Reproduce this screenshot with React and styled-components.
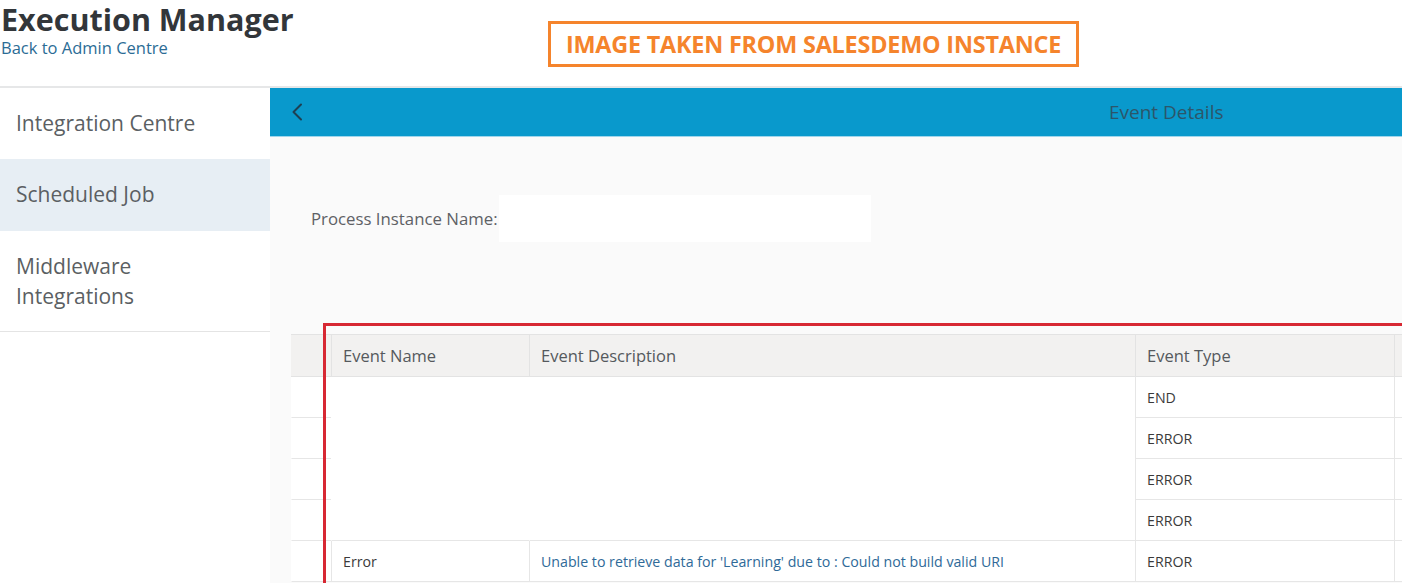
import React from "react";
import styled, { createGlobalStyle } from "styled-components";

const Global = createGlobalStyle`
  html, body { margin: 0; padding: 0; overflow: hidden; background: #ffffff; }
  body { font-family: "Open Sans", "Noto Sans", Arial, sans-serif; color: #333; }
  * { box-sizing: border-box; }
`;

const Page = styled.div`
  width: 1402px;
  height: 583px;
  display: flex;
  flex-direction: column;
  overflow: hidden;
`;

const Header = styled.header`
  height: 88px;
  flex: none;
  display: flex;
  align-items: flex-start;
  border-bottom: 2px solid #e6e7e8;
`;

const TitleBlock = styled.div`
  width: 548px;
  padding-left: 1px;
  padding-top: 1px;
`;

const Title = styled.h1`
  margin: 0;
  font-size: 30.5px;
  line-height: 36px;
  font-weight: 700;
  color: #32363a;
  white-space: nowrap;
`;

const BackLink = styled.a`
  display: block;
  margin-top: 1px;
  font-size: 16.5px;
  line-height: 20px;
  color: #2b6c95;
  text-decoration: none;
`;

const Stamp = styled.div`
  margin-top: 21px;
  width: 531px;
  height: 46px;
  border: 3px solid #f5842c;
  display: flex;
  align-items: center;
  justify-content: center;
  font-size: 23.4px;
  font-weight: 700;
  color: #f5842c;
  letter-spacing: -0.2px;
  white-space: nowrap;
`;

const Body = styled.div`
  flex: 1;
  display: flex;
  min-height: 0;
`;

const Sidebar = styled.nav`
  width: 270px;
  flex: none;
  background: #fff;
  display: flex;
  flex-direction: column;
`;

const NavItem = styled.div`
  padding: 20px 16px 20px;
  font-size: 21px;
  line-height: 30px;
  color: #5b5f63;
  background: ${(p) => (p.$active ? "#e7eef4" : "#fff")};
  border-bottom: 1px solid ${(p) => (p.$last ? "#e4e4e4" : "transparent")};
  min-height: ${(p) => (p.$active ? "72px" : "70px")};
`;

const Main = styled.main`
  flex: 1;
  min-width: 0;
  background: #fafafa;
  overflow: hidden;
  display: flex;
  flex-direction: column;
`;

const Bar = styled.div`
  height: 49px;
  flex: none;
  background: #0999cc;
  border-bottom: 1px solid #9fd6ec;
  display: flex;
  align-items: center;
  padding-left: 21px;
`;

const BarTitle = styled.span`
  margin-left: 806px;
  font-size: 19px;
  color: #2c566a;
  white-space: nowrap;
`;

const FormRow = styled.div`
  margin-top: 58px;
  margin-left: 41px;
  display: flex;
  align-items: center;
  height: 47px;
`;

const Label = styled.label`
  font-size: 16.8px;
  color: #5e6165;
  width: 188px;
  flex: none;
  white-space: nowrap;
`;

const Input = styled.div`
  width: 372px;
  height: 47px;
  background: #fff;
`;

const TableWrap = styled.div`
  position: relative;
  margin-top: 92px;
  margin-left: 21px;
  width: 1300px;
`;

const Grid = "40px 198px 606px 259px 197px";

const HeadRow = styled.div`
  display: grid;
  grid-template-columns: ${Grid};
  height: 43px;
  background: #f2f1f0;
  border-top: 1px solid #e3e3e3;
  border-bottom: 1px solid #e3e3e3;
`;

const HeadCell = styled.div`
  display: flex;
  align-items: center;
  padding-left: 11px;
  font-size: 16.5px;
  color: #55595d;
  border-left: 1px solid ${(p) => (p.$first ? "transparent" : "#e3e3e3")};
  white-space: nowrap;
`;

const Row = styled.div`
  display: grid;
  grid-template-columns: ${Grid};
  height: 41px;
  background: #fff;
`;

const Cell = styled.div`
  display: flex;
  align-items: center;
  padding-left: 11px;
  font-size: 14.2px;
  color: ${(p) => (p.$link ? "#2f6a98" : "#3a3a3a")};
  border-bottom: 1px solid ${(p) => (p.$line ? "#e6e6e6" : "transparent")};
  border-left: 1px solid ${(p) => (p.$divider ? "#e6e6e6" : "transparent")};
  white-space: nowrap;
`;

const Marker = styled.div`
  position: absolute;
  left: 32px;
  top: -11px;
  width: 1200px;
  height: 400px;
  border: 3px solid #d72833;
  pointer-events: none;
`;

const Chevron = () => (
  <svg width="12" height="18" viewBox="0 0 12 18" fill="none">
    <path d="M10 1.5 L2.5 9 L10 16.5" stroke="#1e3f52" strokeWidth="2" strokeLinecap="round" strokeLinejoin="round" />
  </svg>
);

const rows = [
  { type: "END" },
  { type: "ERROR" },
  { type: "ERROR" },
  { type: "ERROR", closing: true },
  {
    type: "ERROR",
    name: "Error",
    desc: "Unable to retrieve data for 'Learning' due to : Could not build valid URI",
  },
];

export default function App() {
  return (
    <Page>
      <Global />
      <Header>
        <TitleBlock>
          <Title>Execution Manager</Title>
          <BackLink href="#">Back to Admin Centre</BackLink>
        </TitleBlock>
        <Stamp>IMAGE TAKEN FROM SALESDEMO INSTANCE</Stamp>
      </Header>
      <Body>
        <Sidebar>
          <NavItem>Integration Centre</NavItem>
          <NavItem $active>Scheduled Job</NavItem>
          <NavItem $last>
            Middleware
            <br />
            Integrations
          </NavItem>
        </Sidebar>
        <Main>
          <Bar>
            <Chevron />
            <BarTitle>Event Details</BarTitle>
          </Bar>
          <FormRow>
            <Label>Process Instance Name:</Label>
            <Input />
          </FormRow>
          <TableWrap>
            <HeadRow>
              <HeadCell $first />
              <HeadCell>Event Name</HeadCell>
              <HeadCell>Event Description</HeadCell>
              <HeadCell>Event Type</HeadCell>
              <HeadCell />
            </HeadRow>
            {rows.map((r, i) => {
              const filled = Boolean(r.name);
              return (
                <Row key={i}>
                  <Cell $line />
                  <Cell $line={filled || r.closing} $divider={filled}>
                    {r.name}
                  </Cell>
                  <Cell $line={filled || r.closing} $divider={filled} $link>
                    {r.desc}
                  </Cell>
                  <Cell $line $divider>
                    {r.type}
                  </Cell>
                  <Cell $line $divider />
                </Row>
              );
            })}
            <Marker />
          </TableWrap>
        </Main>
      </Body>
    </Page>
  );
}
